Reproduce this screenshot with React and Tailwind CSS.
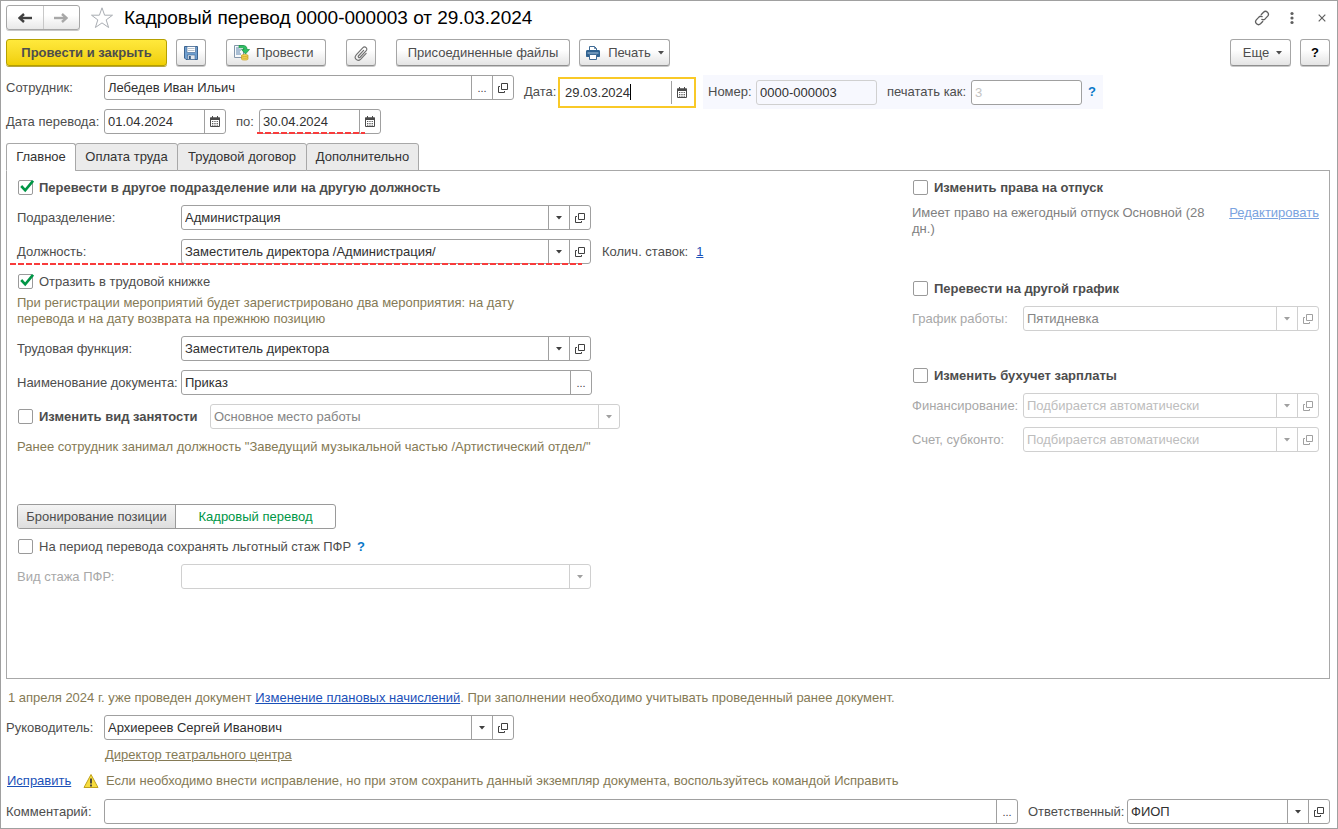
// App.jsx
import React, { useState } from 'react';
import { clsx } from 'clsx';

const TABS = [
  { id: 'main', title: 'Главное', width: 'w-[70px]' },
  { id: 'salary', title: 'Оплата труда', width: 'w-[103px]' },
  { id: 'contract', title: 'Трудовой договор', width: 'w-[130px]' },
  { id: 'extra', title: 'Дополнительно', width: 'w-[113px]' },
];

/* ---------- icons ---------- */

const ArrowIcon = ({ className }) => (
  <svg viewBox="0 0 14 10" className={clsx('w-[14px] h-[10px]', className)} fill="none" stroke="currentColor">
    <path d="M2 5h12" strokeWidth="2.4" />
    <path d="M6 1L1.6 5L6 9" strokeWidth="2.4" />
  </svg>
);

const StarIcon = () => (
  <svg viewBox="0 0 24 24" className="w-6 h-6 text-[#a9adb3]" fill="none" stroke="currentColor">
    <path d="M12 1.8l2.6 7.4h7.9l-6.3 4.7 2.4 7.6L12 16.9l-6.6 4.6 2.4-7.6L1.5 9.2h7.9z" strokeLinejoin="miter" />
  </svg>
);

const SaveIcon = () => (
  <svg viewBox="0 0 16 16" className="w-4 h-4">
    <path d="M1.5 1.5h13v13h-11.5l-1.5-1.5z" fill="#6f9fd0" stroke="#3c638f" />
    <rect x="4" y="1.5" width="8.5" height="6" fill="#fff" stroke="#3c638f" strokeWidth=".6" />
    <path d="M5 3.5h6.5M5 5.5h6.5" stroke="#a8b4c0" strokeWidth=".8" />
    <rect x="4.5" y="10" width="7.5" height="4.5" fill="#e3e8ee" stroke="#3c638f" strokeWidth=".6" />
    <rect x="5.8" y="11" width="2" height="3" fill="#345c87" />
  </svg>
);

const PostIcon = () => (
  <svg viewBox="0 0 17 17" className="w-[17px] h-[17px]">
    <path d="M1.5 1.5h9v12h-9z" fill="#f7f9fb" stroke="#8496aa" />
    <path d="M3 4h3M3 6h5M3 8h4M3 10h5" stroke="#5d84ad" />
    <path d="M6 1.5h4c3 0 4 1.500 4 4h2.500l-4 4.500L8.500 5.500h2.400c0-1.300-.5-1.700-1.800-1.700H6z" fill="#2fc163" stroke="#1a8f43" strokeWidth=".7" />
    <path d="M8.5 11.5c0-1.3 6.5-1.3 6.5 0v3.6c0 1.3-6.5 1.3-6.5 0z" fill="#f6d85a" stroke="#c79d22" strokeWidth=".7" />
    <path d="M8.5 11.7c.5 1 6 1 6.5 0M8.5 13.5c.5 1 6 1 6.5 0" fill="none" stroke="#c79d22" strokeWidth=".7" />
  </svg>
);

const ClipIcon = () => (
  <svg viewBox="1 0.5 14 14" className="w-4 h-4" fill="none" stroke="#707070" strokeLinecap="round">
    <path d="M10.3 5.2L5.9 9.9c-.9 1 .4 2.2 1.3 1.3l5.2-5.500c2-2.200-.9-4.700-2.900-2.700L4 8.900c-3 3.300 1 6.700 3.800 3.900l4.700-5" />
  </svg>
);

const PrintIcon = () => (
  <svg viewBox="0 0 16 16" className="w-4 h-4">
    <path d="M4.5 5.5v-4h5l2 2v2" fill="#fff" stroke="#3f6a94" />
    <path d="M9.5 1.5v2h2" fill="none" stroke="#3f6a94" strokeWidth=".8" />
    <path d="M2.5 5h11c1 0 1.5.5 1.5 1.5V11c0 .8-.4 1-1 1H2c-.6 0-1-.2-1-1V6.500C1 5.500 1.500 5 2.500 5z" fill="#2f6291" />
    <path d="M2.5 8h11" stroke="#a9c4dd" />
    <path d="M4.5 9.5h7v5h-7z" fill="#fff" stroke="#3f6a94" />
  </svg>
);

const LinkIcon = () => (
  <svg viewBox="0 0 16 16" className="w-4 h-4" fill="none" stroke="#606060" strokeWidth="1.3" strokeLinecap="round">
    <path d="M7.3 4.5l2.2-2.3c2.6-2.4 6.5 1 4.2 3.9l-2.6 2.8c-1 .9-2.2 1-3.2.5" />
    <path d="M8.7 11.5l-2.2 2.3c-2.6 2.4-6.5-1-4.2-3.9l2.6-2.8c1-.9 2.2-1 3.2-.5" />
  </svg>
);

const DotsIcon = () => (
  <svg viewBox="0 0 4 14" className="w-1 h-[14px]" fill="#606060">
    <circle cx="2" cy="2.5" r="1.6" />
    <circle cx="2" cy="7" r="1.6" />
    <circle cx="2" cy="11.5" r="1.6" />
  </svg>
);

const CloseIcon = () => (
  <svg viewBox="0 0 8 8" className="w-2 h-2" stroke="#606060" strokeWidth="1.2">
    <path d="M.7.7l6.6 6.6M7.3.7L.7 7.3" />
  </svg>
);

const CalendarIcon = () => (
  <svg viewBox="0 0 10 11" className="w-[10px] h-[11px]">
    <path d="M.5 2h9v8.5h-9z" fill="#fff" stroke="#4a4a4a" />
    <path d="M0 1.5h10V4H0z" fill="#4a4a4a" />
    <path d="M2.5 0v2M7.5 0v2" stroke="#4a4a4a" />
    <path d="M2 5.5h6M2 7.5h6M2 9.2h6" stroke="#4a4a4a" strokeDasharray="1 .7" strokeWidth=".9" />
  </svg>
);

const OpenIcon = () => (
  <svg viewBox="0 0 10 10" className="w-[10px] h-[10px]" fill="none" stroke="currentColor">
    <path d="M3.5 .5h6v6h-6z" />
    <path d="M2 3.5H.5v6h6V8" />
  </svg>
);

const CaretIcon = () => (
  <svg viewBox="0 0 6 4" className="w-[6px] h-1" fill="currentColor">
    <path d="M0 0h6L3 3.5z" />
  </svg>
);

const WarningIcon = () => (
  <svg viewBox="0 0 16 16" className="w-4 h-4 shrink-0">
    <path d="M8 1.5l7 13H1z" fill="#f7dc3e" stroke="#c0a21c" strokeLinejoin="round" />
    <path d="M8 5.5v5M8 11.5v2" stroke="#3c3c3c" strokeWidth="1.8" />
  </svg>
);

/* ---------- controls ---------- */

const ToolButton = ({ className, children, ...props }) => (
  <button
    type="button"
    className={clsx(
      'h-[27px] flex items-center shrink-0 rounded-[3px] border border-[#a6a6a6] border-b-[#8f8f8f] bg-linear-to-b from-white from-40% to-[#e4e4e4] shadow-[0_1px_0_#c8c8c8]',
      className
    )}
    {...props}
  >
    {children}
  </button>
);

const FieldButton = ({ label, disabled, children }) => (
  <button
    type="button"
    aria-label={label}
    disabled={disabled}
    className={clsx(
      'w-[21px] shrink-0 flex items-center justify-center border-l',
      disabled ? 'border-[#d0d0d0] text-[#a0a0a0]' : 'border-[#a0a0a0] text-[#404040]'
    )}
  >
    {children}
  </button>
);

const Field = ({
  id,
  type = 'text',
  value,
  placeholder,
  disabled = false,
  open = false,
  dots = false,
  label,
  className,
}) => (
  <div
    className={clsx(
      'h-[25px] flex min-w-0 rounded-[3px] border bg-white',
      disabled ? 'border-[#d0d0d0]' : 'border-[#a0a0a0]',
      className
    )}
  >
    {type === 'select' ? (
      <div className="grid flex-1 min-w-0">
        <select
          id={id}
          aria-label={label}
          disabled={disabled}
          className={clsx(
            'col-start-1 row-start-1 appearance-none pl-[3px] pr-6 min-w-0 outline-none',
            !disabled && 'text-[#303030]',
            disabled && !placeholder && 'text-[#858585]',
            disabled && placeholder && 'text-[#bdbdbd]'
          )}
        >
          <option>{value || placeholder}</option>
        </select>
        <span
          className={clsx(
            'col-start-1 row-start-1 justify-self-end w-[21px] flex items-center justify-center border-l pointer-events-none',
            disabled ? 'border-[#d0d0d0] text-[#a0a0a0]' : 'border-[#a0a0a0] text-[#404040]'
          )}
        >
          <CaretIcon />
        </span>
      </div>
    ) : (
      <input
        id={id}
        type="text"
        aria-label={label}
        defaultValue={value}
        className="flex-1 min-w-0 px-[3px] outline-none text-[#303030]"
      />
    )}
    {dots && (
      <FieldButton label="Выбрать">
        <span className="text-[11px]">...</span>
      </FieldButton>
    )}
    {type === 'date' && (
      <FieldButton label="Календарь">
        <CalendarIcon />
      </FieldButton>
    )}
    {open && (
      <FieldButton label="Открыть" disabled={disabled}>
        <OpenIcon />
      </FieldButton>
    )}
  </div>
);

const Checkbox = ({ label, defaultChecked = false, bold = false }) => (
  <label className={clsx('h-[17px] flex items-center gap-[5px] pl-px', bold && 'font-bold')}>
    <span className="grid w-4 h-4 shrink-0">
      <input
        type="checkbox"
        defaultChecked={defaultChecked}
        className="peer col-start-1 row-start-1 appearance-none w-[15px] h-[15px] rounded-[2px] border border-[#9a9a9a] bg-white self-center"
      />
      <svg
        viewBox="0 0 16 16"
        className="col-start-1 row-start-1 w-4 h-4 hidden peer-checked:block pointer-events-none"
        fill="none"
        stroke="#009646"
        strokeWidth="2.6"
      >
        <path d="M3.2 6l4 4.3L15 .8" />
      </svg>
    </span>
    {label}
  </label>
);

const DashLine = ({ className }) => (
  <span
    className={clsx(
      'absolute h-[2px] pointer-events-none bg-[repeating-linear-gradient(90deg,#f83c3c_0px,#f83c3c_6px,transparent_6px,transparent_8px)]',
      className
    )}
  />
);

/* ---------- form parts ---------- */

const TitleBar = () => (
  <header className="flex items-center h-[25px]">
    <div className="flex h-[25px] w-[74px] rounded-[3px] border border-[#a6a6a6] bg-linear-to-b from-white from-40% to-[#e8e8e8] shadow-[0_1px_0_#c8c8c8]">
      <button type="button" aria-label="Назад" className="flex-1 flex items-center justify-center text-[#404040]">
        <ArrowIcon />
      </button>
      <button
        type="button"
        aria-label="Вперед"
        className="flex-1 flex items-center justify-center border-l border-[#c8c8c8] text-[#a8a8a8]"
      >
        <ArrowIcon className="rotate-180" />
      </button>
    </div>
    <button type="button" aria-label="В избранное" className="ml-[10px]">
      <StarIcon />
    </button>
    <h1 className="ml-[10px] text-[19px] text-black whitespace-nowrap">
      Кадровый перевод 0000-000003 от 29.03.2024
    </h1>
    <div className="ml-auto flex items-center">
      <button type="button" aria-label="Ссылка" className="w-[30px] flex justify-center"><LinkIcon /></button>
      <button type="button" aria-label="Меню" className="w-[30px] flex justify-center"><DotsIcon /></button>
      <button type="button" aria-label="Закрыть" className="w-[30px] flex justify-center"><CloseIcon /></button>
    </div>
  </header>
);

const Toolbar = () => (
  <div className="mt-[9px] mr-[7px] flex items-center">
    <button
      type="button"
      className="h-[27px] w-[161px] rounded-[3px] border border-[#b5a000] bg-linear-to-b from-[#ffe93b] to-[#f0cf00] shadow-[0_1px_0_#b8a53c] font-bold"
    >
      Провести и закрыть
    </button>
    <ToolButton className="ml-[9px] w-[30px] justify-center" aria-label="Записать"><SaveIcon /></ToolButton>
    <ToolButton className="ml-5 w-[100px] pl-[6px] gap-[6px]"><PostIcon />Провести</ToolButton>
    <ToolButton className="ml-5 w-[30px] justify-center" aria-label="Файлы"><ClipIcon /></ToolButton>
    <ToolButton className="ml-5 w-[174px] justify-center">Присоединенные файлы</ToolButton>
    <ToolButton className="ml-[9px] w-[91px] justify-center gap-[7px]"><PrintIcon />Печать<CaretIcon /></ToolButton>
    <ToolButton className="ml-auto w-[61px] justify-center gap-[7px] pl-1">Еще<CaretIcon /></ToolButton>
    <ToolButton className="ml-[9px] w-[30px] justify-center font-bold text-black" aria-label="Справка">?</ToolButton>
  </div>
);

const DocumentHeader = () => (
  <div className="mt-[9px]">
    <div className="flex h-[34px] items-start">
      <label htmlFor="employee" className="w-[98px] shrink-0 leading-[25px]">Сотрудник:</label>
      <Field id="employee" value="Лебедев Иван Ильич" dots open className="w-[410px]" />
      <label htmlFor="date" className="ml-[10px] w-[34px] h-[34px] leading-[34px]">Дата:</label>
      <div className="relative mt-[2px] flex w-[138px] h-[31px] border-2 border-[#f9c927] bg-white p-[2px]">
        <input
          id="date"
          type="text"
          defaultValue="29.03.2024"
          className="flex-1 min-w-0 pl-[3px] outline-none text-[#303030]"
        />
        <FieldButton label="Календарь"><CalendarIcon /></FieldButton>
        {/* text cursor of the active field */}
        <span className="absolute left-[70px] top-[5px] w-px h-4 bg-black" />
      </div>
      <div className="ml-[7px] flex items-center h-[34px] pl-[5px] pr-[7px] bg-[#f7f8fe]">
        <label htmlFor="number" className="w-[48px]">Номер:</label>
        <input
          id="number"
          type="text"
          readOnly
          value="0000-000003"
          className="w-[121px] h-[25px] px-[3px] rounded-[3px] border border-[#d0d0d0] outline-none text-[#303030]"
        />
        <label htmlFor="print-as" className="ml-[10px] w-[84px]">печатать как:</label>
        <input
          id="print-as"
          type="text"
          placeholder="3"
          className="w-[111px] h-[25px] px-[3px] rounded-[3px] border border-[#a0a0a0] bg-white outline-none placeholder:text-[#c4c4c4]"
        />
        <button type="button" aria-label="Подсказка" className="ml-[6px] font-bold text-[#0a78c8]">?</button>
      </div>
    </div>
    <div className="flex items-center">
      <label htmlFor="date-from" className="w-[98px] shrink-0 whitespace-nowrap">Дата перевода:</label>
      <Field id="date-from" type="date" value="01.04.2024" className="w-[122px]" />
      <label htmlFor="date-to" className="ml-[10px] w-[23px]">по:</label>
      <div className="relative">
        <Field id="date-to" type="date" value="30.04.2024" className="w-[122px]" />
        <DashLine className="-left-[2px] right-4 bottom-0" />
      </div>
    </div>
  </div>
);

const MainTab = () => (
  <div className="flex-1 flex flex-wrap justify-between pt-2 px-[10px] pb-[80px]">
    <section className="flex flex-col gap-[9px]">
      <Checkbox bold defaultChecked label="Перевести в другое подразделение или на другую должность" />
      <div className="flex items-center">
        <label htmlFor="department" className="w-[164px]">Подразделение:</label>
        <Field id="department" type="select" value="Администрация" open className="w-[410px]" />
      </div>
      <div className="relative flex items-center">
        <label htmlFor="position" className="w-[164px]">Должность:</label>
        <Field id="position" type="select" value="Заместитель директора /Администрация/" open className="w-[410px]" />
        <span className="ml-[11px]">Колич. ставок:</span>
        <a href="#rates" className="ml-2 text-[#1a50b8] underline">1</a>
        <DashLine className="-left-[7px] w-[572px] -bottom-px" />
      </div>
      <div className="flex flex-col gap-[5px]">
        <Checkbox defaultChecked label="Отразить в трудовой книжке" />
        <p className="w-[520px] leading-4 text-[#857a55]">
          При регистрации мероприятий будет зарегистрировано два мероприятия: на дату перевода и на дату возврата на прежнюю позицию
        </p>
      </div>
      <div className="flex items-center">
        <label htmlFor="function" className="w-[164px]">Трудовая функция:</label>
        <Field id="function" type="select" value="Заместитель директора" open className="w-[410px]" />
      </div>
      <div className="flex items-center">
        <label htmlFor="doc-name" className="w-[164px] whitespace-nowrap">Наименование документа:</label>
        <Field id="doc-name" value="Приказ" dots className="w-[411px]" />
      </div>
      <div className="flex items-center">
        <div className="w-[193px] whitespace-nowrap"><Checkbox bold label="Изменить вид занятости" /></div>
        <Field type="select" label="Вид занятости" value="Основное место работы" disabled className="w-[410px]" />
      </div>
      <p className="leading-[18px] text-[#857a55]">
        Ранее сотрудник занимал должность "Заведущий музыкальной частью /Артистический отдел/"
      </p>
      <div className="mt-[39px] flex h-[25px] w-[319px] rounded-[3px] border border-[#9a9a9a] overflow-hidden">
        <button type="button" className="w-[157px] bg-linear-to-b from-[#f4f4f4] to-[#dedede] whitespace-nowrap">
          Бронирование позиции
        </button>
        <button type="button" className="flex-1 border-l border-[#9a9a9a] text-[#009646]">
          Кадровый перевод
        </button>
      </div>
      <div className="flex items-center gap-[6px]">
        <Checkbox label="На период перевода сохранять льготный стаж ПФР" />
        <button type="button" aria-label="Подсказка" className="h-[17px] leading-[17px] font-bold text-[#0a78c8]">?</button>
      </div>
      <div className="flex items-center">
        <label htmlFor="seniority" className="w-[164px] text-[#a8a8a8]">Вид стажа ПФР:</label>
        <Field id="seniority" type="select" disabled className="w-[410px]" />
      </div>
    </section>

    <section className="w-[407px] flex flex-col gap-[9px]">
      <Checkbox bold label="Изменить права на отпуск" />
      <div className="flex items-start justify-between leading-4">
        <p className="w-[300px] text-[#808080]">Имеет право на ежегодный отпуск Основной (28 дн.)</p>
        <a href="#edit" className="text-[#7aa3e0] underline">Редактировать</a>
      </div>
      <div className="mt-[34px]"><Checkbox bold label="Перевести на другой график" /></div>
      <div className="flex items-center">
        <label htmlFor="schedule" className="w-[111px] text-[#a8a8a8]">График работы:</label>
        <Field id="schedule" type="select" value="Пятидневка" disabled open className="flex-1" />
      </div>
      <div className="mt-[27px]"><Checkbox bold label="Изменить бухучет зарплаты" /></div>
      <div className="flex items-center">
        <label htmlFor="financing" className="w-[111px] text-[#a8a8a8]">Финансирование:</label>
        <Field id="financing" type="select" placeholder="Подбирается автоматически" disabled open className="flex-1" />
      </div>
      <div className="flex items-center">
        <label htmlFor="account" className="w-[111px] text-[#a8a8a8]">Счет, субконто:</label>
        <Field id="account" type="select" placeholder="Подбирается автоматически" disabled open className="flex-1" />
      </div>
    </section>
  </div>
);

const Footer = () => (
  <footer className="mr-[7px]">
    <p className="mt-[11px] pl-[2px] leading-4 text-[#857a55]">
      1 апреля 2024 г. уже проведен документ{' '}
      <a href="#accruals" className="text-[#1a50b8] underline">Изменение плановых начислений</a>
      . При заполнении необходимо учитывать проведенный ранее документ.
    </p>
    <div className="mt-[9px] flex items-center">
      <label htmlFor="manager" className="w-[98px]">Руководитель:</label>
      <Field id="manager" type="select" value="Архиереев Сергей Иванович" open className="w-[410px]" />
    </div>
    <div className="mt-[7px] pl-[99px] leading-4">
      <a href="#manager-position" className="text-[#857a55] underline">Директор театрального центра</a>
    </div>
    <div className="mt-[9px] pl-px flex items-center leading-[18px]">
      <a href="#fix" className="w-[76px] text-[#1a50b8] underline">Исправить</a>
      <WarningIcon />
      <span className="ml-[7px] text-[#857a55]">
        Если необходимо внести исправление, но при этом сохранить данный экземпляр документа, воспользуйтесь командой Исправить
      </span>
    </div>
    <div className="mt-[9px] flex items-center">
      <label htmlFor="comment" className="w-[98px]">Комментарий:</label>
      <Field id="comment" dots className="flex-1" />
      <label htmlFor="responsible" className="ml-[10px] w-[99px]">Ответственный:</label>
      <Field id="responsible" type="select" value="ФИОП" open className="w-[203px]" />
    </div>
  </footer>
);

const App = () => {
  const [activeTab, setActiveTab] = useState('main');

  return (
    <div className="min-h-screen flex flex-col border border-[#a0a0a0] bg-white py-1 pl-[5px] font-['Liberation_Sans',Arial,sans-serif] text-[13px] leading-4 text-[#4d4d4d]">
      <TitleBar />
      <Toolbar />
      <DocumentHeader />

      <div role="tablist" className="mt-[9px] mr-[7px] flex h-7">
        {TABS.map((tab) => (
          <button
            key={tab.id}
            type="button"
            role="tab"
            aria-selected={activeTab === tab.id}
            onClick={() => setActiveTab(tab.id)}
            className={clsx(
              '-mr-px rounded-t-[3px] border border-[#a8a8a8] whitespace-nowrap text-[#333]',
              tab.width,
              activeTab === tab.id ? 'bg-white border-b-white' : 'bg-[#ebebeb]'
            )}
          >
            {tab.title}
          </button>
        ))}
        <div className="flex-1 border-b border-[#a8a8a8]" />
      </div>
      <main className="mr-[7px] flex-1 flex flex-col border border-t-0 border-[#a8a8a8]">
        {activeTab === 'main' && <MainTab />}
      </main>

      <Footer />
    </div>
  );
};

export default App;
